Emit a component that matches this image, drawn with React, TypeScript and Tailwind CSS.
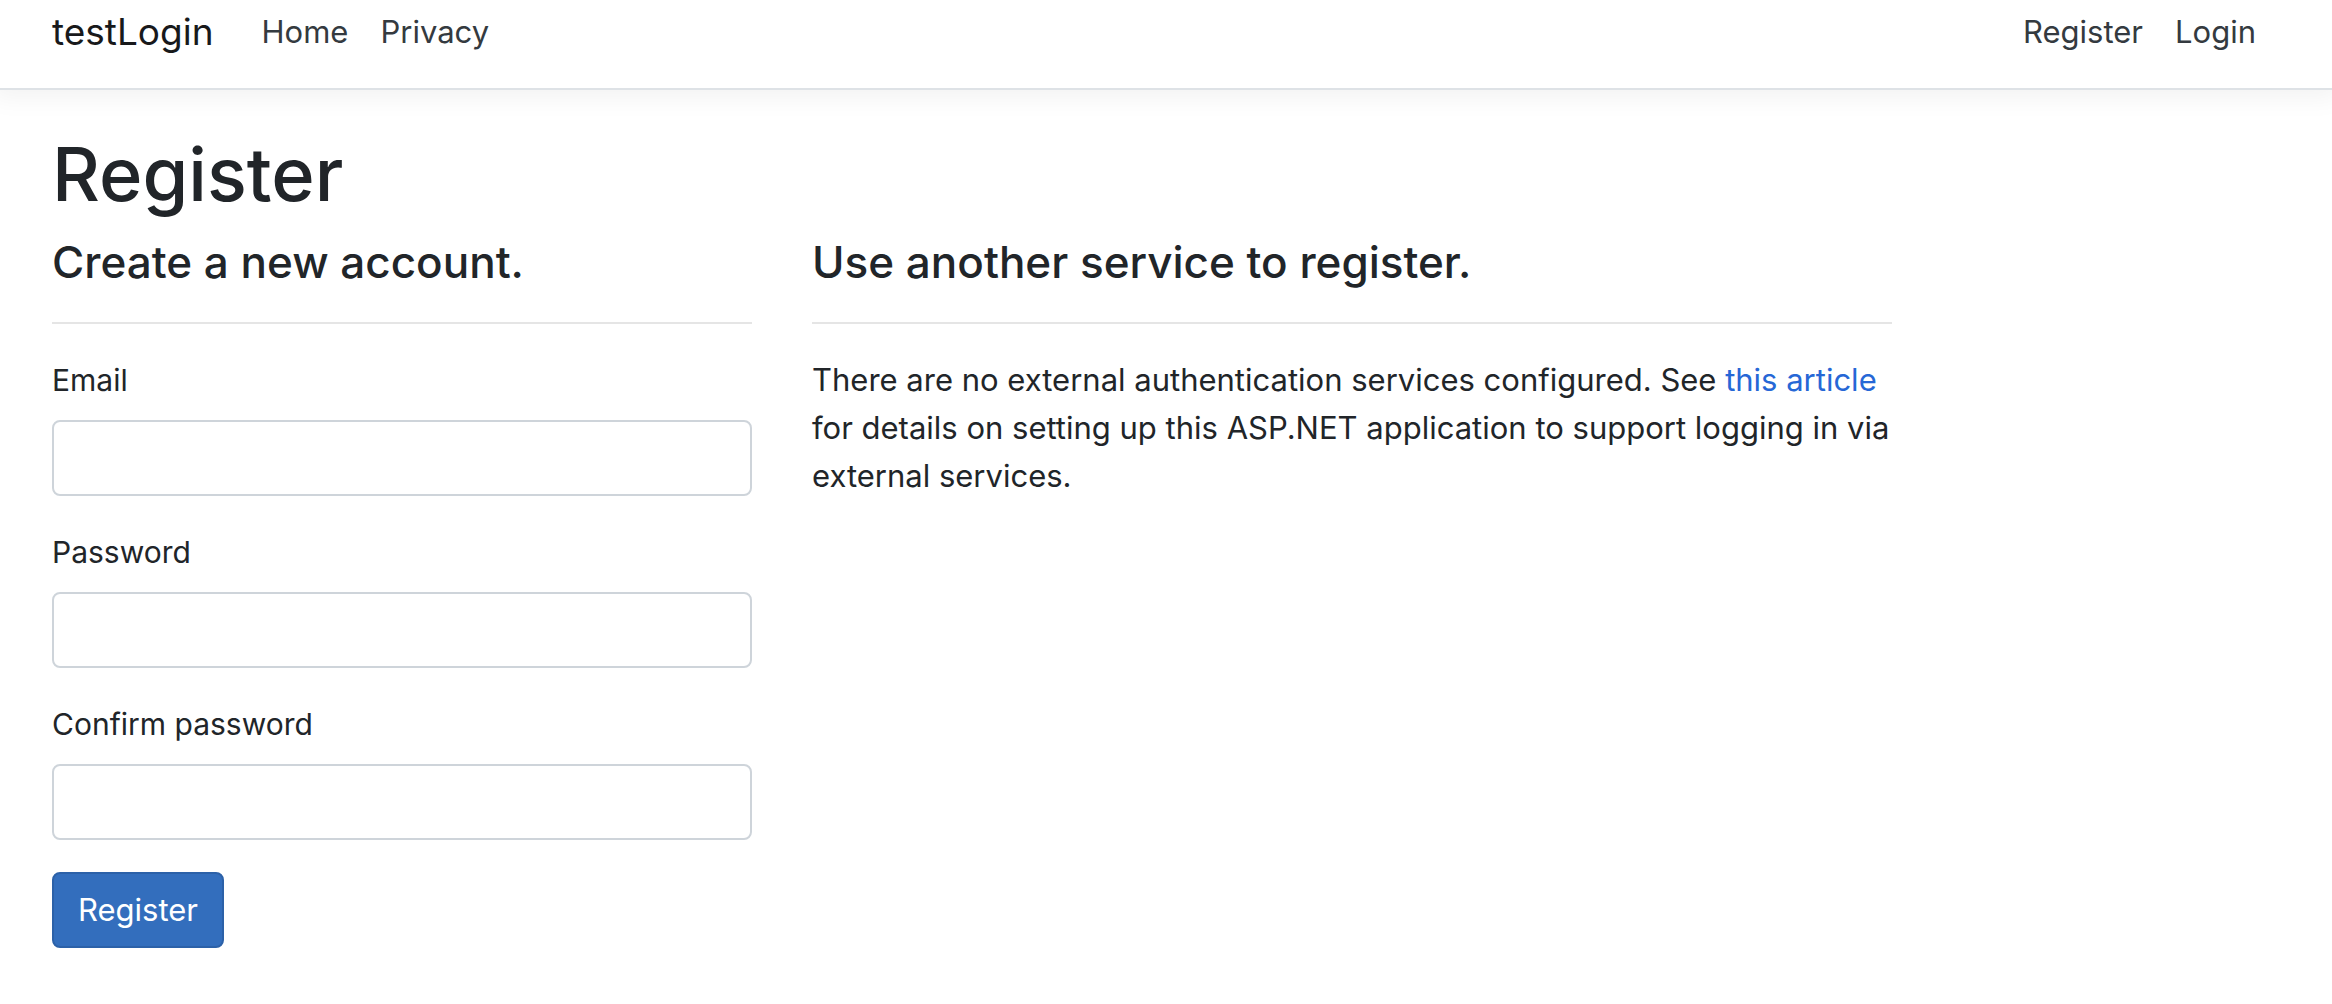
import React from "react";

const fields = [
  { id: "email", label: "Email", type: "email" },
  { id: "password", label: "Password", type: "password" },
  { id: "confirm", label: "Confirm password", type: "password" },
];

export default function App() {
  return (
    <div className="min-h-screen overflow-x-hidden bg-white font-[Inter,sans-serif] text-[31px] leading-12 text-[#212529]">
      <header className="border-b-2 border-[#dee2e6] shadow-[0_0_24px_8px_rgba(0,0,0,0.05)]">
        <nav className="flex items-center px-[52px] pt-1 pb-7 text-[#343a40]">
          <a href="#" className="mr-12 text-[37px] leading-14 text-[#18191b]">testLogin</a>
          <div className="flex grow gap-8">
            <a href="#">Home</a>
            <a href="#">Privacy</a>
          </div>
          <div className="flex gap-8 pr-6">
            <a href="#">Register</a>
            <a href="#">Login</a>
          </div>
        </nav>
      </header>
      <main className="pt-9 pr-[60px] pb-8 pl-[52px]">
        <h1 className="mb-3 text-[74px] leading-24 font-medium">Register</h1>
        <div className="grid grid-cols-12 gap-x-[60px]">
          <section className="col-span-4">
            <h2 className="text-[44px] leading-14 font-medium">Create a new account.</h2>
            <hr className="my-8 border-t-2 border-[#e5e5e5]" />
            <form className="flex flex-col items-start gap-8">
              {fields.map((f) => (
                <div key={f.id} className="w-full">
                  <label htmlFor={f.id} className="mb-4 block text-[30px]">{f.label}</label>
                  <input id={f.id} type={f.type} className="block h-19 w-full rounded-lg border-2 border-[#ced4da] px-6" />
                </div>
              ))}
              <button type="button" className="h-19 rounded-lg border-2 border-[#2c61a8] bg-[#336ebd] px-6 text-white">Register</button>
            </form>
          </section>
          <section className="col-span-6">
            <h3 className="text-[44px] leading-14 font-medium">Use another service to register.</h3>
            <hr className="my-8 border-t-2 border-[#e5e5e5]" />
            <p>
              There are no external authentication services configured. See{" "}
              <a href="#" className="text-[#2667d6]">this article</a> for details on setting up this ASP.NET application to support logging in via external services.
            </p>
          </section>
        </div>
      </main>
    </div>
  );
}
